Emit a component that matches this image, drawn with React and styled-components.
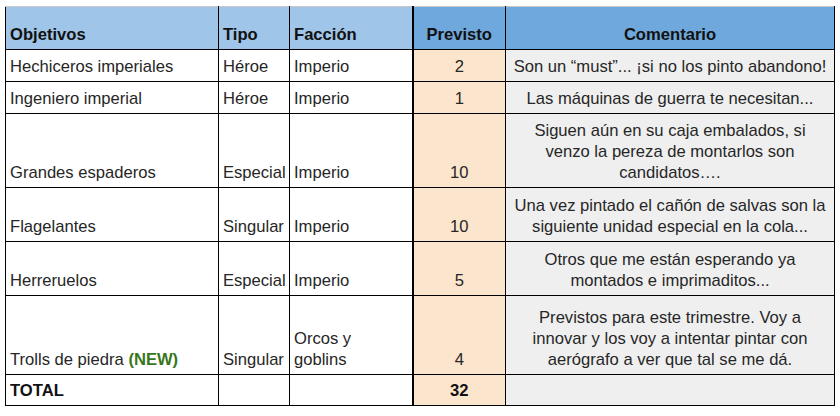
import React from "react";
import styled, { createGlobalStyle } from "styled-components";

const Global = createGlobalStyle`
  html, body { margin: 0; padding: 0; background: #ffffff; }
  body { font-family: "Liberation Sans", Arial, sans-serif; }
`;

const Page = styled.div`
  padding: 6px 0 0 5px;
`;

const Table = styled.table`
  border-collapse: collapse;
  table-layout: fixed;
  width: 829px;
  font-family: "Liberation Sans", Arial, sans-serif;
  font-size: 16.6px;
  line-height: 21px;
  color: #262626;
`;

const HeadRow = styled.tr`
  height: 43px;
`;

const Row = styled.tr`
  height: ${(p) => p.$h}px;
`;

const Th = styled.th`
  background: ${(p) => (p.$dark ? "#6fa8dc" : "#9fc5e8")};
  border: 1px solid #000;
  border-top: 1px solid #c8c8c8;
  ${(p) => (p.$thickLeft ? "border-left: 2px solid #000;" : "")}
  text-align: ${(p) => (p.$center ? "center" : "left")};
  vertical-align: bottom;
  padding: 0 4px 4px 4px;
  font-weight: bold;
  color: #111111;
  white-space: nowrap;
`;

const Td = styled.td`
  border: 1px solid #000;
  ${(p) => (p.$thickLeft ? "border-left: 2px solid #000;" : "")}
  background: ${(p) =>
    p.$kind === "plan" ? "#fce5cd" : p.$kind === "note" ? "#efefef" : "#ffffff"};
  text-align: ${(p) => (p.$center ? "center" : "left")};
  vertical-align: bottom;
  padding: 0 4px 4px 4px;
  white-space: nowrap;
  overflow: hidden;
  font-weight: ${(p) => (p.$bold ? "bold" : "normal")};
  color: ${(p) => (p.$bold ? "#111111" : "inherit")};
`;

const New = styled.span`
  color: #38761d;
  font-weight: bold;
`;

const rows = [
  { h: 32, name: "Hechiceros imperiales", tipo: "Héroe", fac: ["Imperio"], n: "2", note: ["Son un “must”... ¡si no los pinto abandono!"] },
  { h: 32, name: "Ingeniero imperial", tipo: "Héroe", fac: ["Imperio"], n: "1", note: ["Las máquinas de guerra te necesitan..."] },
  { h: 74, name: "Grandes espaderos", tipo: "Especial", fac: ["Imperio"], n: "10", note: ["Siguen aún en su caja embalados, si", "venzo la pereza de montarlos son", "candidatos…."] },
  { h: 54, name: "Flagelantes", tipo: "Singular", fac: ["Imperio"], n: "10", note: ["Una vez pintado el cañón de salvas son la", "siguiente unidad especial en la cola..."] },
  { h: 54, name: "Herreruelos", tipo: "Especial", fac: ["Imperio"], n: "5", note: ["Otros que me están esperando ya", "montados e imprimaditos..."] },
  { h: 79, name: "Trolls de piedra", isNew: true, tipo: "Singular", fac: ["Orcos y", "goblins"], n: "4", note: ["Previstos para este trimestre. Voy a", "innovar y los voy a intentar pintar con", "aerógrafo a ver que tal se me dá."] },
];

const Lines = ({ lines }) =>
  lines.map((l, i) => (
    <React.Fragment key={i}>
      {i > 0 && <br />}
      {l}
    </React.Fragment>
  ));

export default function App() {
  return (
    <>
      <Global />
      <Page>
        <Table>
          <colgroup>
            <col style={{ width: 213 }} />
            <col style={{ width: 71 }} />
            <col style={{ width: 123 }} />
            <col style={{ width: 93 }} />
            <col style={{ width: 329 }} />
          </colgroup>
          <thead>
            <HeadRow>
              <Th>Objetivos</Th>
              <Th>Tipo</Th>
              <Th>Facción</Th>
              <Th $dark $center $thickLeft>Previsto</Th>
              <Th $dark $center>Comentario</Th>
            </HeadRow>
          </thead>
          <tbody>
            {rows.map((r) => (
              <Row key={r.name} $h={r.h}>
                <Td>
                  {r.name}
                  {r.isNew && (
                    <>
                      {" "}
                      <New>(NEW)</New>
                    </>
                  )}
                </Td>
                <Td>{r.tipo}</Td>
                <Td>
                  <Lines lines={r.fac} />
                </Td>
                <Td $kind="plan" $center $thickLeft>{r.n}</Td>
                <Td $kind="note" $center>
                  <Lines lines={r.note} />
                </Td>
              </Row>
            ))}
            <Row $h={31}>
              <Td $bold>TOTAL</Td>
              <Td />
              <Td />
              <Td $kind="plan" $center $thickLeft $bold>32</Td>
              <Td $kind="note" />
            </Row>
          </tbody>
        </Table>
      </Page>
    </>
  );
}
